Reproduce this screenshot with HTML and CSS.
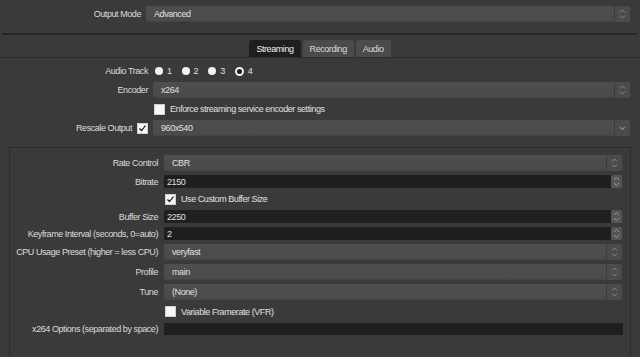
FILE: index.html
```html
<!DOCTYPE html>
<html>
<head>
    <title>Output Settings</title>
    <link rel="stylesheet" href="styles.css">
</head>
<body>
    <div class="mode-row">
        <label class="lbl">Output Mode</label>
        <div class="combo">
            <span class="value">Advanced</span>
            <span class="arrows">
                <svg width="7" height="12" viewBox="0 0 7 12"><path d="M1 4.5 L3.5 2 L6 4.5 M1 7.5 L3.5 10 L6 7.5" fill="none" stroke="#8a8a8a" stroke-width="1"/></svg>
            </span>
        </div>
    </div>

    <div class="sep"></div>

    <div class="tabs">
        <span class="tab active">Streaming</span>
        <span class="tab">Recording</span>
        <span class="tab">Audio</span>
    </div>

    <div class="settings">
        <label class="lbl">Audio Track</label>
        <div class="radios">
            <span class="radio-item"><span class="radio"></span>1</span>
            <span class="radio-item"><span class="radio"></span>2</span>
            <span class="radio-item"><span class="radio"></span>3</span>
            <span class="radio-item"><span class="radio checked"></span>4</span>
        </div>

        <label class="lbl">Encoder</label>
        <div class="combo">
            <span class="value">x264</span>
            <span class="arrows">
                <svg width="7" height="12" viewBox="0 0 7 12"><path d="M1 4.5 L3.5 2 L6 4.5 M1 7.5 L3.5 10 L6 7.5" fill="none" stroke="#8a8a8a" stroke-width="1"/></svg>
            </span>
        </div>

        <span></span>
        <div class="check-row"><span class="checkbox"></span>Enforce streaming service encoder settings</div>

        <label class="lbl">Rescale Output <span class="checkbox on"><svg width="9" height="9" viewBox="0 0 9 9"><path d="M1.5 4.5 L3.5 6.5 L7.5 1.5" fill="none" stroke="#111" stroke-width="1.2"/></svg></span></label>
        <div class="combo">
            <span class="value">960x540</span>
            <span class="arrows">
                <svg width="7" height="12" viewBox="0 0 7 12"><path d="M1 5 L3.5 7.5 L6 5" fill="none" stroke="#8a8a8a" stroke-width="1.2"/></svg>
            </span>
        </div>
    </div>

    <div class="group">
        <div class="group-grid">
            <label class="lbl">Rate Control</label>
            <div class="combo">
                <span class="value">CBR</span>
                <span class="arrows">
                    <svg width="7" height="12" viewBox="0 0 7 12"><path d="M1 4.5 L3.5 2 L6 4.5 M1 7.5 L3.5 10 L6 7.5" fill="none" stroke="#8a8a8a" stroke-width="1"/></svg>
                </span>
            </div>

            <label class="lbl">Bitrate</label>
            <div class="spin">
                <span class="field">2150</span>
                <span class="spin-btn">
                    <svg width="9" height="11" viewBox="0 0 9 11"><path d="M2 4 L4.5 1.5 L7 4 M2 7 L4.5 9.5 L7 7" fill="none" stroke="#9a9a9a" stroke-width="1"/></svg>
                </span>
            </div>

            <span></span>
            <div class="check-row"><span class="checkbox on"><svg width="9" height="9" viewBox="0 0 9 9"><path d="M1.5 4.5 L3.5 6.5 L7.5 1.5" fill="none" stroke="#111" stroke-width="1.2"/></svg></span>Use Custom Buffer Size</div>

            <label class="lbl">Buffer Size</label>
            <div class="spin">
                <span class="field">2250</span>
                <span class="spin-btn">
                    <svg width="9" height="11" viewBox="0 0 9 11"><path d="M2 4 L4.5 1.5 L7 4 M2 7 L4.5 9.5 L7 7" fill="none" stroke="#9a9a9a" stroke-width="1"/></svg>
                </span>
            </div>

            <label class="lbl">Keyframe Interval (seconds, 0=auto)</label>
            <div class="spin">
                <span class="field">2</span>
                <span class="spin-btn">
                    <svg width="9" height="11" viewBox="0 0 9 11"><path d="M2 4 L4.5 1.5 L7 4 M2 7 L4.5 9.5 L7 7" fill="none" stroke="#9a9a9a" stroke-width="1"/></svg>
                </span>
            </div>

            <label class="lbl">CPU Usage Preset (higher = less CPU)</label>
            <div class="combo">
                <span class="value">veryfast</span>
                <span class="arrows">
                    <svg width="7" height="12" viewBox="0 0 7 12"><path d="M1 4.5 L3.5 2 L6 4.5 M1 7.5 L3.5 10 L6 7.5" fill="none" stroke="#8a8a8a" stroke-width="1"/></svg>
                </span>
            </div>

            <label class="lbl">Profile</label>
            <div class="combo">
                <span class="value">main</span>
                <span class="arrows">
                    <svg width="7" height="12" viewBox="0 0 7 12"><path d="M1 4.5 L3.5 2 L6 4.5 M1 7.5 L3.5 10 L6 7.5" fill="none" stroke="#8a8a8a" stroke-width="1"/></svg>
                </span>
            </div>

            <label class="lbl">Tune</label>
            <div class="combo">
                <span class="value">(None)</span>
                <span class="arrows">
                    <svg width="7" height="12" viewBox="0 0 7 12"><path d="M1 4.5 L3.5 2 L6 4.5 M1 7.5 L3.5 10 L6 7.5" fill="none" stroke="#8a8a8a" stroke-width="1"/></svg>
                </span>
            </div>

            <span></span>
            <div class="check-row tall"><span class="checkbox"></span>Variable Framerate (VFR)</div>

            <label class="lbl">x264 Options (separated by space)</label>
            <div class="text-input"></div>
        </div>
    </div>
</body>
</html>
```

FILE: styles.css
```css
body {
    margin: 0;
    background-color: #3a3a3a;
    color: #e0e0e0;
    font-family: "Liberation Sans", Arial, sans-serif;
    font-size: 9px;
    letter-spacing: -0.43px;
    overflow: hidden;
    height: 357px;
}

.lbl {
    display: flex;
    align-items: center;
    justify-content: flex-end;
    gap: 5px;
    white-space: nowrap;
    color: #dcdcdc;
}

/* output mode */
.mode-row {
    display: grid;
    grid-template-columns: 141px 1fr;
    column-gap: 5px;
    padding: 6px 10px 0 0;
}

.combo {
    display: flex;
    height: 16px;
    background: linear-gradient(#4e4e4e, #4a4a4a);
    border-radius: 2px;
    box-shadow: inset 0 -1px 0 #444;
}

.combo .value {
    flex: 1;
    display: flex;
    align-items: center;
    padding-left: 8px;
}

.combo .arrows {
    width: 15px;
    display: flex;
    align-items: center;
    justify-content: center;
    border-left: 1px solid #3c3c3c;
    background-color: #4b4b4b;
    border-radius: 0 2px 2px 0;
}

.sep {
    height: 2px;
    margin: 11px 3px 0 2px;
    background-color: #262626;
}

/* tabs */
.tabs {
    display: flex;
    justify-content: center;
    gap: 2px;
    margin-top: 5px;
    border-bottom: 1px solid #2c2c2c;
}

.tab {
    height: 17px;
    display: flex;
    align-items: center;
    padding: 0 7px;
    background-color: #4b4b4b;
    border-radius: 3px 3px 0 0;
    color: #dadada;
}

.tab.active {
    background-color: #1e1e1e;
    color: #f0f0f0;
}

/* stream settings */
.settings {
    display: grid;
    grid-template-columns: 148px 1fr;
    column-gap: 5px;
    row-gap: 4px;
    padding: 6px 10px 0 0;
}

.radios {
    display: flex;
    align-items: center;
    height: 14px;
    gap: 10px;
    padding-left: 2px;
}

.radio-item {
    display: flex;
    align-items: center;
    gap: 4px;
}

.radio {
    width: 8px;
    height: 8px;
    border-radius: 50%;
    background-color: #f4f4f4;
}

.radio.checked {
    width: 5px;
    height: 5px;
    background-color: #1e1e1e;
    border: 2px solid #f4f4f4;
}

.check-row {
    display: flex;
    align-items: center;
    gap: 5px;
    height: 14px;
    padding-left: 1px;
}

.check-row.tall {
    height: 15px;
}

.checkbox {
    width: 9px;
    height: 9px;
    background-color: #f6f6f6;
    border: 1px solid #cfcfcf;
    display: flex;
    align-items: center;
    justify-content: center;
}

/* group box */
.group {
    margin: 11px 9px 0 9px;
    border: 1px solid #2b2b2b;
    border-bottom: none;
    height: 202px;
    padding: 7px 8px 0 0;
}

.group-grid {
    display: grid;
    grid-template-columns: 148px 1fr;
    column-gap: 6px;
    row-gap: 4px;
}

.spin {
    display: flex;
    height: 13px;
}

.spin .field,
.text-input {
    flex: 1;
    display: flex;
    align-items: center;
    padding-left: 3px;
    background-color: #1f1f1f;
}

.spin-btn {
    width: 11px;
    display: flex;
    align-items: center;
    justify-content: center;
    background-color: #555;
    border-radius: 2px;
}

.text-input {
    height: 12px;
    margin-right: -1px;
}
```
